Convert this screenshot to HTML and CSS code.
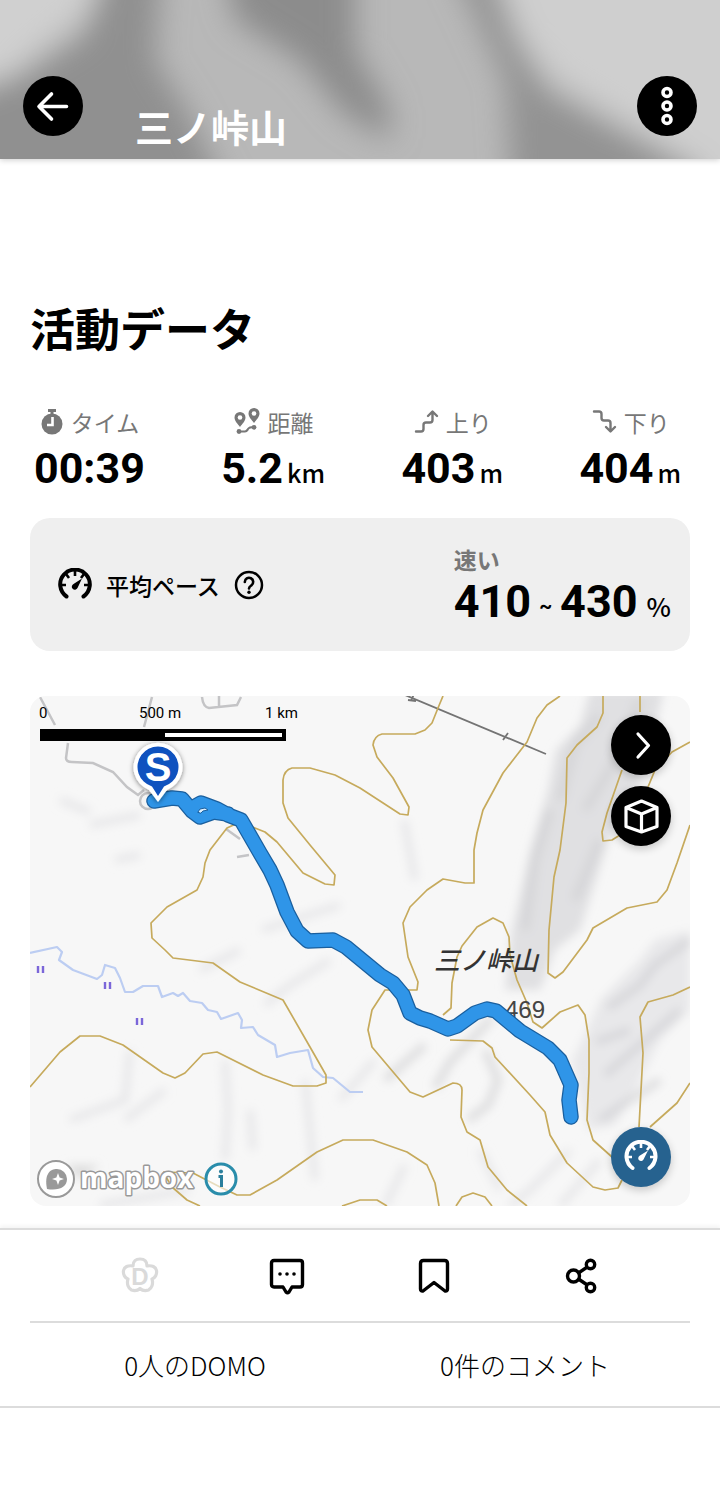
FILE: index.html
```
<!DOCTYPE html>
<html lang="ja">
<head>
    <meta charset="UTF-8">
    <meta name="viewport" content="width=device-width, initial-scale=1">
    <title>三ノ峠山</title>
    <link rel="stylesheet" href="styles.css">
</head>
<body>
<!--ヘッダー-->
<header class="header">
    <svg class="header-bg" viewBox="0 0 720 159" preserveAspectRatio="none" aria-hidden="true">
        <defs>
            <filter id="soft" filterUnits="userSpaceOnUse" x="-80" y="-80" width="880" height="320"><feGaussianBlur stdDeviation="15"/></filter>
        </defs>
        <rect width="720" height="159" fill="#b8b8b8"/>
        <g filter="url(#soft)">
            <path d="M-80-80H130L90 10 40 50 0 85-80 120z" fill="#d0d0d0"/>
            <path d="M118-80H165L155 60 190 115 250 240H-80V105L20 75 85 35z" fill="#909090"/>
            <path d="M215-80H355L355 50 390 110 390 140 345 115 300 60 235 20z" fill="#8c8c8c"/>
            <path d="M480-80H800V240H760L660 145 555 80 500 20z" fill="#cfcfcf"/>
            <path d="M430-80H475L515 30 545 90 610 125 700 170V240H515L505 80z" fill="#939393"/>
        </g>
    </svg>
    <button class="round-btn" type="button" aria-label="戻る">
        <svg width="60" height="60" viewBox="0 0 60 60"><path d="M43.500 30.500H17M28.500 18L16 30.500l12.500 12.500" fill="none" stroke="#fff" stroke-width="3.600" stroke-linecap="round" stroke-linejoin="round"/></svg>
    </button>
    <h1 class="header-title">三ノ峠山</h1>
    <button class="round-btn" type="button" aria-label="メニュー">
        <svg width="60" height="60" viewBox="0 0 60 60"><g fill="none" stroke="#fff" stroke-width="3.600"><circle cx="30" cy="16.500" r="4"/><circle cx="30" cy="30" r="4"/><circle cx="30" cy="43.500" r="4"/></g></svg>
    </button>
</header>

<!--活動データ-->
<main class="main">
    <h2 class="title">活動データ</h2>
    <dl class="stats">
        <div class="stat">
            <dt>
                <svg width="24" height="28" viewBox="0 0 24 28"><path d="M8 1h8v3H8zM10.500 3h3v4h-3z" fill="#777"/><circle cx="12" cy="16" r="10.500" fill="#777"/><path d="M12.500 9v8H7" fill="none" stroke="#fff" stroke-width="2.600"/></svg>
                タイム
            </dt>
            <dd>00:39</dd>
        </div>
        <div class="stat">
            <dt>
                <svg width="28" height="28" viewBox="0 0 28 28"><path d="M7 4a5.500 5.500 0 0 1 5.500 5.500c0 3.500-3.300 6.500-5.500 9.500-2.200-3-5.500-6-5.500-9.500A5.500 5.500 0 0 1 7 4zM21 0a5.500 5.500 0 0 1 5.500 5.500c0 3.500-3.300 6.500-5.500 9.500-2.200-3-5.500-6-5.500-9.500A5.500 5.500 0 0 1 21 0z" fill="#777"/><circle cx="7" cy="9.500" r="2.300" fill="#fff"/><circle cx="21" cy="5.500" r="2.300" fill="#fff"/><path d="M6 23.500h6c2 0 2-1 3-2.500s2-2 6-2" fill="none" stroke="#777" stroke-width="2.200"/><circle cx="6" cy="23.500" r="2.400" fill="#777"/><circle cx="21" cy="19.300" r="2.400" fill="#777"/></svg>
                距離
            </dt>
            <dd>5.2<span class="unit">km</span></dd>
        </div>
        <div class="stat">
            <dt>
                <svg width="26" height="28" viewBox="0 0 26 28"><path d="M3 23.500h5q2.500 0 2.500-2.500v-4q0-2.500 2.500-2.500h4q2.500 0 2.500-2.500V4M15 8l4.500-4.500L24 8" fill="none" stroke="#777" stroke-width="2.400" stroke-linecap="round" stroke-linejoin="round"/></svg>
                上り
            </dt>
            <dd>403<span class="unit">m</span></dd>
        </div>
        <div class="stat">
            <dt>
                <svg width="26" height="28" viewBox="0 0 26 28"><path d="M3 3.500h5q2.500 0 2.500 2.500v4q0 2.500 2.500 2.500h4q2.500 0 2.500 2.500v8M15 19l4.500 4.500L24 19" fill="none" stroke="#777" stroke-width="2.400" stroke-linecap="round" stroke-linejoin="round"/></svg>
                下り
            </dt>
            <dd>404<span class="unit">m</span></dd>
        </div>
    </dl>

    <section class="pace">
        <svg width="36" height="34" viewBox="0 0 36 34">
            <path d="M9.500 28.500A14.800 14.800 0 1 1 26.500 28.500" fill="none" stroke="#000" stroke-width="4" stroke-linecap="round"/>
            <path d="M18 2v6M9 6l3 4M27 6l-3 4M4 17h5M32 17h-5" stroke="#000" stroke-width="2.600"/>
            <path d="M25 10.500l-4.500 9.500a3 3 0 1 1-4-4z" fill="#000"/>
        </svg>
        <span class="pace-name">平均ペース</span>
        <button class="help" type="button" aria-label="ヘルプ">
            <svg width="30" height="30" viewBox="0 0 30 30"><circle cx="15" cy="15" r="13" fill="none" stroke="#000" stroke-width="2.500"/><path d="M10.800 12a4.200 4.200 0 1 1 6.600 3.400c-1.600 1.100-2.400 1.600-2.400 3" fill="none" stroke="#000" stroke-width="2.600" stroke-linecap="round"/><circle cx="15" cy="22.200" r="1.700"/></svg>
        </button>
        <div class="pace-result">
            <div class="pace-level">速い</div>
            <div class="pace-value">410<span class="tilde">~</span>430<span class="percent">%</span></div>
        </div>
    </section>

    <!--地図-->
    <section class="map" aria-label="地図">
        <svg class="map-canvas" viewBox="30 696 660 510">
            <defs>
                <filter id="shade" filterUnits="userSpaceOnUse" x="0" y="660" width="720" height="580"><feGaussianBlur stdDeviation="5"/></filter>
                <filter id="drop" x="-30%" y="-30%" width="160%" height="160%"><feDropShadow dx="0" dy="1" stdDeviation="2.500" flood-opacity=".5"/></filter>
            </defs>
            <rect x="30" y="696" width="660" height="510" fill="#f7f7f7"/>
            <!--陰影-->
            <g filter="url(#shade)">
                <path d="M590 690L664 690 652 740 640 780 612 830 596 880 580 930 555 950 540 990 505 990 512 930 530 850 548 790 556 750 580 725z" fill="#e0e0e2"/>
                <path d="M588 1130L572 1060 585 1035 600 1000 640 960 655 940 690 930V1010L660 1040 640 1080 615 1125z" fill="#e8e8ea"/>
                <g fill="none" stroke="#cfcfd2" stroke-width="8" opacity=".65">
                    <path d="M600 715L575 745 560 800M640 700L610 770 585 810M550 810L535 860 525 930M600 840L575 900"/>
                    <path d="M690 940L655 965 640 985 608 1008M680 1010L640 1045 605 1075M630 1030L596 1042"/>
                    <path d="M492 1018L450 1062 435 1088M485 1050L498 1080 488 1105 468 1120M385 1080L425 1045M660 1080L600 1120"/>
                </g>
                <g fill="none" stroke="#e6e6e8" stroke-width="7">
                    <path d="M340 905L262 930M330 960L290 985 265 1005M240 950L200 970M375 1060L340 1100M405 1165L385 1206M570 1150L530 1190 510 1206M600 1160L560 1206"/>
                    <path d="M130 1050L125 1100 70 1120M165 1090L125 1120M225 1060L228 1110 225 1160M250 1110L253 1150M305 1080L315 1180M100 1205L190 1190"/>
                    <path d="M90 825L140 815M60 800L90 812M404 820L415 880M140 855L115 860M480 1150L500 1190"/>
                </g>
                <path d="M65 1165L100 1165 80 1180z" fill="#ddd"/>
            </g>
            <!--道路と送電線-->
            <g fill="none" stroke="#c4c4c6" stroke-width="2.500">
                <path d="M40 697L55 725M68 743L66 758Q66 762 72 762L93 763 113 772 127 787 138 795 144 790M152 697L144 727M202 697Q203 707 209 708L237 705 241 697M219 696V708"/>
                <circle cx="148" cy="801" r="8" fill="#f4f4f4"/>
                <path d="M237 857l12-2M226 829l14 10"/>
            </g>
            <path d="M405 695L546 754M503 740l5-7M411 701l3-7M408 700l8 1" fill="none" stroke="#747474" stroke-width="1.800"/>
            <!--川-->
            <path d="M30 953L57 947 62 952 59 960 73 970 97 979 102 975 105 965 115 968 120 978 125 992 133 992 143 986 158 986 162 997 173 993 178 996 183 993 190 1001 202 1003 208 1010 217 1012 221 1019 238 1013 242 1020 241 1028 253 1027 258 1035 275 1045 277 1057 290 1053 308 1050 313 1068 323 1077 333 1078 350 1092 363 1092" fill="none" stroke="#bccdf2" stroke-width="2.200" stroke-linejoin="round"/>
            <path d="M38 966v7M43 966v7M105 982v7M110 982v7M137 1018v7M142 1018v7" stroke="#7b66d9" stroke-width="2.400"/>
            <!--等高線-->
            <g fill="none" stroke="#c6aa5c" stroke-width="1.700" stroke-linejoin="round">
                <path d="M443 696L438 708 432 723 425 730 415 734H382Q374 736 373 745L377 757 393 778 409 807 408 815 400 814 360 788 335 775 310 768H292Q284 770 283 780V803L288 818 310 845 335 875 334 885 325 884 303 873 277 842 265 832 240 822 227 828 210 850 205 863 203 877 197 890 167 907 151 923 152 938 165 950 173 958 213 963 240 982 283 1000 310 1047 326 1075V1083L317 1086H293L263 1075 217 1052 203 1054 185 1073 175 1078 163 1073 123 1045 100 1036H80L60 1052 30 1087"/>
                <path d="M560 696L547 705 537 718 527 742 503 773 483 810 477 833 474 850V883H465L443 879 427 890 410 907 403 923 408 957 418 982 417 990 385 990 372 1010 368 1030 372 1047 410 1092 423 1097 453 1083Q462 1083 462 1090L461 1117 467 1132 480 1140 488 1167 507 1190 527 1206"/>
                <path d="M443 1015L451 1008 452 983 457 957 462 946 477 927 493 918 503 923 509 937 510 955 517 980 527 1003 533 1022 542 1028 560 1012 578 1005 585 1015 589 1040V1073L587 1120 593 1140 612 1157"/>
                <path d="M450 1040L483 1041 492 1048 495 1057 530 1095 545 1112 550 1135 567 1163 593 1187 605 1190 618 1188 622 1180"/>
                <path d="M603 696V713L597 727 577 745 567 758 566 803 560 850 554 877 549 930 548 973 555 978 563 972 587 940 593 928 627 908 657 902 667 890 677 863 690 825"/>
                <path d="M640 696V712M622 770L607 813 602 832 603 841 612 840 620 835M648 787L655 770 672 752 690 742M690 987L673 995 648 1002 640 1017 643 1053 639 1127M690 1083L677 1103 650 1127"/>
                <path d="M163 1172L172 1187 187 1200 200 1206M163 1172L193 1173 220 1187 237 1195H250L277 1180 317 1152 343 1140 373 1140 407 1152 427 1165 435 1183 439 1206M342 1206L360 1200H377L387 1206M456 1206L462 1197 473 1193 485 1197 492 1206"/>
            </g>
            <text class="peak-name" x="434" y="970">三ノ峠山</text>
            <text class="peak-height" x="505" y="1018">469</text>
            <!--軌跡-->
            <g fill="none" stroke-linecap="round" stroke-linejoin="round">
                <path stroke="#1a5f9e" stroke-width="15.500" d="M154 801L172 798 182 799 192 811 200 817 214 812 228 814M192 808L201 803 217 809 228 815 241 820 260 853 270 870 277 885 287 912 297 931 308 941 333 940 346 947 380 975 393 983 403 995 410 1013 420 1018 430 1021 448 1029 457 1026 475 1013 487 1009 496 1011 520 1031 548 1048 560 1060 571 1085 569 1100 571 1117"/>
                <path stroke="#2f95e8" stroke-width="13" d="M154 801L172 798 182 799 192 811 200 817 214 812 228 814M192 808L201 803 217 809 228 815 241 820 260 853 270 870 277 885 287 912 297 931 308 941 333 940 346 947 380 975 393 983 403 995 410 1013 420 1018 430 1021 448 1029 457 1026 475 1013 487 1009 496 1011 520 1031 548 1048 560 1060 571 1085 569 1100 571 1117"/>
                <path d="M198 812l2-3 5-1 3 2-5 1-2 2z" fill="#dcefff" stroke="#1a5f9e" stroke-width="1"/>
            </g>
            <!--スタート地点-->
            <path d="M158 802L149 790A24.500 24.500 0 1 1 167 790z" fill="#fff" filter="url(#drop)"/>
            <path d="M158 796L152 786.500A20.500 20.500 0 1 1 164 786.500z" fill="#0f52bf"/>
            <text class="pin-text" x="158" y="781">S</text>
            <!--mapbox-->
            <circle cx="56" cy="1179" r="18" fill="#fff" stroke="#999" stroke-width="2"/>
            <path d="M47 1189c-3-15 3-20 10-20a10 10 0 0 1 10 10c0 8-8 12-20 10z" fill="#999"/>
            <path d="M58 1173l1.600 4.400L64 1179l-4.400 1.600L58 1185l-1.600-4.400L52 1179l4.400-1.600z" fill="#fff"/>
            <text class="mapbox" x="80" y="1188">mapbox</text>
        </svg>
        <div class="scale">
            <div class="scale-labels"><span>0</span><span>500 m</span><span>1 km</span></div>
            <div class="scale-bar"></div>
        </div>
        <div class="map-tools">
            <button class="round-btn" type="button" aria-label="開く">
                <svg width="60" height="60" viewBox="0 0 60 60"><path d="M27 19l10.500 11.500L27 42" fill="none" stroke="#fff" stroke-width="3.200" stroke-linecap="round" stroke-linejoin="round"/></svg>
            </button>
            <button class="round-btn" type="button" aria-label="3D表示">
                <svg width="60" height="60" viewBox="0 0 60 60"><path d="M30.500 15L46 21.500v19l-15.500 5.500L15 40.500v-19zM15 21.500L30.500 28 46 21.500M30.500 28v18" fill="none" stroke="#fff" stroke-width="3.200" stroke-linejoin="round"/></svg>
            </button>
        </div>
        <button class="round-btn speed-btn" type="button" aria-label="ペース表示">
            <svg width="36" height="34" viewBox="0 0 36 34">
                <path d="M9.500 28A14.500 14.500 0 1 1 26.500 28" fill="none" stroke="#fff" stroke-width="4" stroke-linecap="round"/>
                <path d="M18 2v6M9 6l3 4M27 6l-3 4M4 17h5M32 17h-5" stroke="#fff" stroke-width="2.600"/>
                <path d="M25 10.500l-4.500 9a2.800 2.800 0 1 1-3.900-3.700z" fill="#fff"/>
            </svg>
        </button>
        <button class="info-btn" type="button" aria-label="地図の情報">
            <svg width="34" height="34" viewBox="0 0 34 34"><circle cx="17" cy="17" r="15" fill="#fff" fill-opacity=".6" stroke="#2a8dab" stroke-width="3"/><path d="M14.500 14.500h3V25" fill="none" stroke="#2a7f9c" stroke-width="3"/><circle cx="17" cy="9.500" r="2" fill="#2a7f9c"/></svg>
        </button>
    </section>
</main>

<!--フッター-->
<footer class="footer">
    <div class="actions">
        <button class="action" type="button" aria-label="DOMO">
            <svg width="40" height="40" viewBox="0 0 40 40"><path d="M13 10C13 5 16 3 20 3s7 2 7 7c5-1 8.900 1 9.500 4.500.700 4-1.500 7.500-4.500 8.500 1.500 5-.300 9.500-3.500 11-3 1-6.300.500-8.500-1.500-2.200 2-5.500 2.500-8.500 1.500C8.300 32.500 6.500 28 8 23c-3-1-5.200-4.500-4.500-8.500C4.100 11 8 9 13 10z" fill="none" stroke="#dadada" stroke-width="3.200" stroke-linejoin="round"/><text class="domo" x="20" y="29">D</text></svg>
        </button>
        <button class="action" type="button" aria-label="コメント">
            <svg width="40" height="40" viewBox="0 0 40 40"><path d="M7 4.500h26q2.500 0 2.500 2.500v21.500q0 2.500-2.500 2.500h-8l-3 5q-1.500 1.500-3 0l-3-5H7q-2.500 0-2.500-2.500V7Q4.500 4.500 7 4.500z" fill="none" stroke="#000" stroke-width="3.400" stroke-linejoin="round"/><circle cx="13" cy="18" r="1.800"/><circle cx="20" cy="18" r="1.800"/><circle cx="27" cy="18" r="1.800"/></svg>
        </button>
        <button class="action" type="button" aria-label="保存">
            <svg width="40" height="40" viewBox="0 0 40 40"><path d="M9.500 4.500h21q3 0 3 3v25.500q0 2.500-2.500 2L20 26.500 9 35q-2.500.500-2.500-2V7.500q0-3 3-3z" fill="none" stroke="#000" stroke-width="3.400" stroke-linejoin="round"/></svg>
        </button>
        <button class="action" type="button" aria-label="共有">
            <svg width="40" height="40" viewBox="0 0 40 40"><path d="M13 20L30 8.500M13 20l17 11.500" stroke="#000" stroke-width="3.400"/><g fill="#fff" stroke="#000" stroke-width="3.400"><circle cx="12.500" cy="20" r="6"/><circle cx="29.500" cy="8.500" r="4.200"/><circle cx="29.500" cy="31.500" r="4.200"/></g></svg>
        </button>
    </div>
    <div class="counts">
        <a href="#domo">0人のDOMO</a>
        <a href="#comments">0件のコメント</a>
    </div>
</footer>
</body>
</html>
```
FILE: styles.css
```
*{
    box-sizing: border-box;
}
body{
    margin: 0;
    background: #fff;
    color: #000;
    font-family: Roboto, "Noto Sans CJK JP", sans-serif;
}
h1, h2, dl, dd{
    margin: 0;
}
svg{
    display: block;
    flex: none;
}
button{
    padding: 0;
    border: 0;
    background: none;
    cursor: pointer;
}
.round-btn{
    flex: none;
    display: flex;
    align-items: center;
    justify-content: center;
    width: 60px;
    height: 60px;
    border-radius: 50%;
    background: #000;
}

/* header */
.header{
    position: relative;
    display: flex;
    align-items: flex-start;
    height: 159px;
    padding: 76px 23px 0;
    box-shadow: 0 1px 6px rgba(0,0,0,.2);
}
.header-bg{
    position: absolute;
    top: 0;
    left: 0;
    width: 100%;
    height: 100%;
    z-index: -1;
}
.header-title{
    flex: 1;
    padding: 22px 0 0 52px;
    color: #fff;
    font-size: 38px;
    line-height: 56px;
    font-family: "Noto Sans CJK JP", sans-serif;
}

/* data */
.main{
    padding: 136px 30px 0;
}
.title{
    font-family: "Noto Sans CJK JP", sans-serif;
    font-size: 45px;
    line-height: 66px;
}
.stats{
    display: flex;
    justify-content: space-between;
    margin-top: 45px;
    padding: 0 9px 0 4px;
}
.stat dt{
    display: flex;
    align-items: center;
    justify-content: center;
    gap: 7px;
    color: #777;
    font-family: "Noto Sans CJK JP", sans-serif;
    font-size: 23px;
    line-height: 32px;
}
.stat dd{
    padding-top: 2px;
    font-size: 43px;
    font-weight: bold;
    line-height: 56px;
    text-align: center;
}
.unit{
    margin-left: 4px;
    font-family: "Noto Sans CJK JP", sans-serif;
    font-size: 25px;
    font-weight: 500;
    line-height: 1;
}
.pace{
    display: flex;
    align-items: center;
    min-height: 133px;
    margin-top: 22px;
    padding: 0 19px 0 27px;
    border-radius: 20px;
    background: #efefef;
}
.pace-name{
    margin: 0 14px 0 13px;
    font-family: "Noto Sans CJK JP", sans-serif;
    font-size: 23px;
    font-weight: 500;
}
.pace-result{
    margin-left: auto;
    padding-top: 7px;
}
.pace-level{
    color: #777;
    font-family: "Noto Sans CJK JP", sans-serif;
    font-size: 23px;
    font-weight: bold;
    line-height: 32px;
}
.pace-value{
    font-size: 45px;
    font-weight: bold;
    line-height: 54px;
}
.tilde{
    margin: 0 8px;
    font-size: 20px;
    vertical-align: 4px;
}
.percent{
    margin-left: 9px;
    font-family: "Noto Sans CJK JP", sans-serif;
    font-size: 26px;
    font-weight: 500;
    line-height: 1;
}

/* map */
.map{
    position: relative;
    margin-top: 45px;
    border-radius: 16px;
    overflow: hidden;
}
.map-canvas{
    width: 100%;
    height: auto;
}
.peak-name{
    font: italic 500 26px "Noto Sans CJK JP", sans-serif;
    fill: #333;
}
.peak-height{
    font: 24px "Liberation Sans", sans-serif;
    fill: #444;
}
.pin-text{
    font: bold 40px "Liberation Sans", sans-serif;
    text-anchor: middle;
    fill: #fff;
}
.mapbox{
    font: bold 28px "Open Sans", sans-serif;
    fill: #fff;
    stroke: #999;
    stroke-width: 3px;
    stroke-linejoin: round;
    paint-order: stroke;
}
.scale{
    position: absolute;
    top: 8px;
    left: 9px;
}
.scale-labels{
    display: grid;
    grid-template-columns: 100px 126px auto;
    font-size: 15px;
    line-height: 18px;
}
.scale-bar{
    width: 246px;
    height: 12px;
    margin: 7px 0 0 1px;
    border: 4px solid #000;
    background: linear-gradient(90deg, #000 51%, #fff 51%);
}
.map-tools{
    position: absolute;
    top: 19px;
    right: 19px;
    display: flex;
    flex-direction: column;
    gap: 11px;
}
.map-tools .round-btn,
.speed-btn{
    box-shadow: 0 3px 8px rgba(0,0,0,.2);
}
.speed-btn{
    position: absolute;
    right: 19px;
    bottom: 19px;
    background: #26628f;
}
.info-btn{
    position: absolute;
    bottom: 10px;
    left: 174px;
}

/* footer */
.footer{
    margin-top: 22px;
    border-top: 2px solid #dcdcdc;
    border-bottom: 2px solid #dcdcdc;
    box-shadow: 0 -2px 4px rgba(0,0,0,.05);
}
.actions{
    display: grid;
    grid-template-columns: repeat(4, 1fr);
    padding: 0 66px;
}
.action{
    display: flex;
    align-items: center;
    justify-content: center;
    height: 91px;
}
.domo{
    font: bold 24px "Liberation Sans", sans-serif;
    text-anchor: middle;
    fill: #dadada;
}
.counts{
    display: grid;
    grid-template-columns: 1fr 1fr;
    margin: 0 30px;
    border-top: 2px solid #dcdcdc;
}
.counts a{
    padding: 22px 0;
    color: #000;
    font-family: "Noto Sans CJK JP", sans-serif;
    font-size: 26px;
    font-weight: 300;
    line-height: 39px;
    text-align: center;
    text-decoration: none;
}
```
